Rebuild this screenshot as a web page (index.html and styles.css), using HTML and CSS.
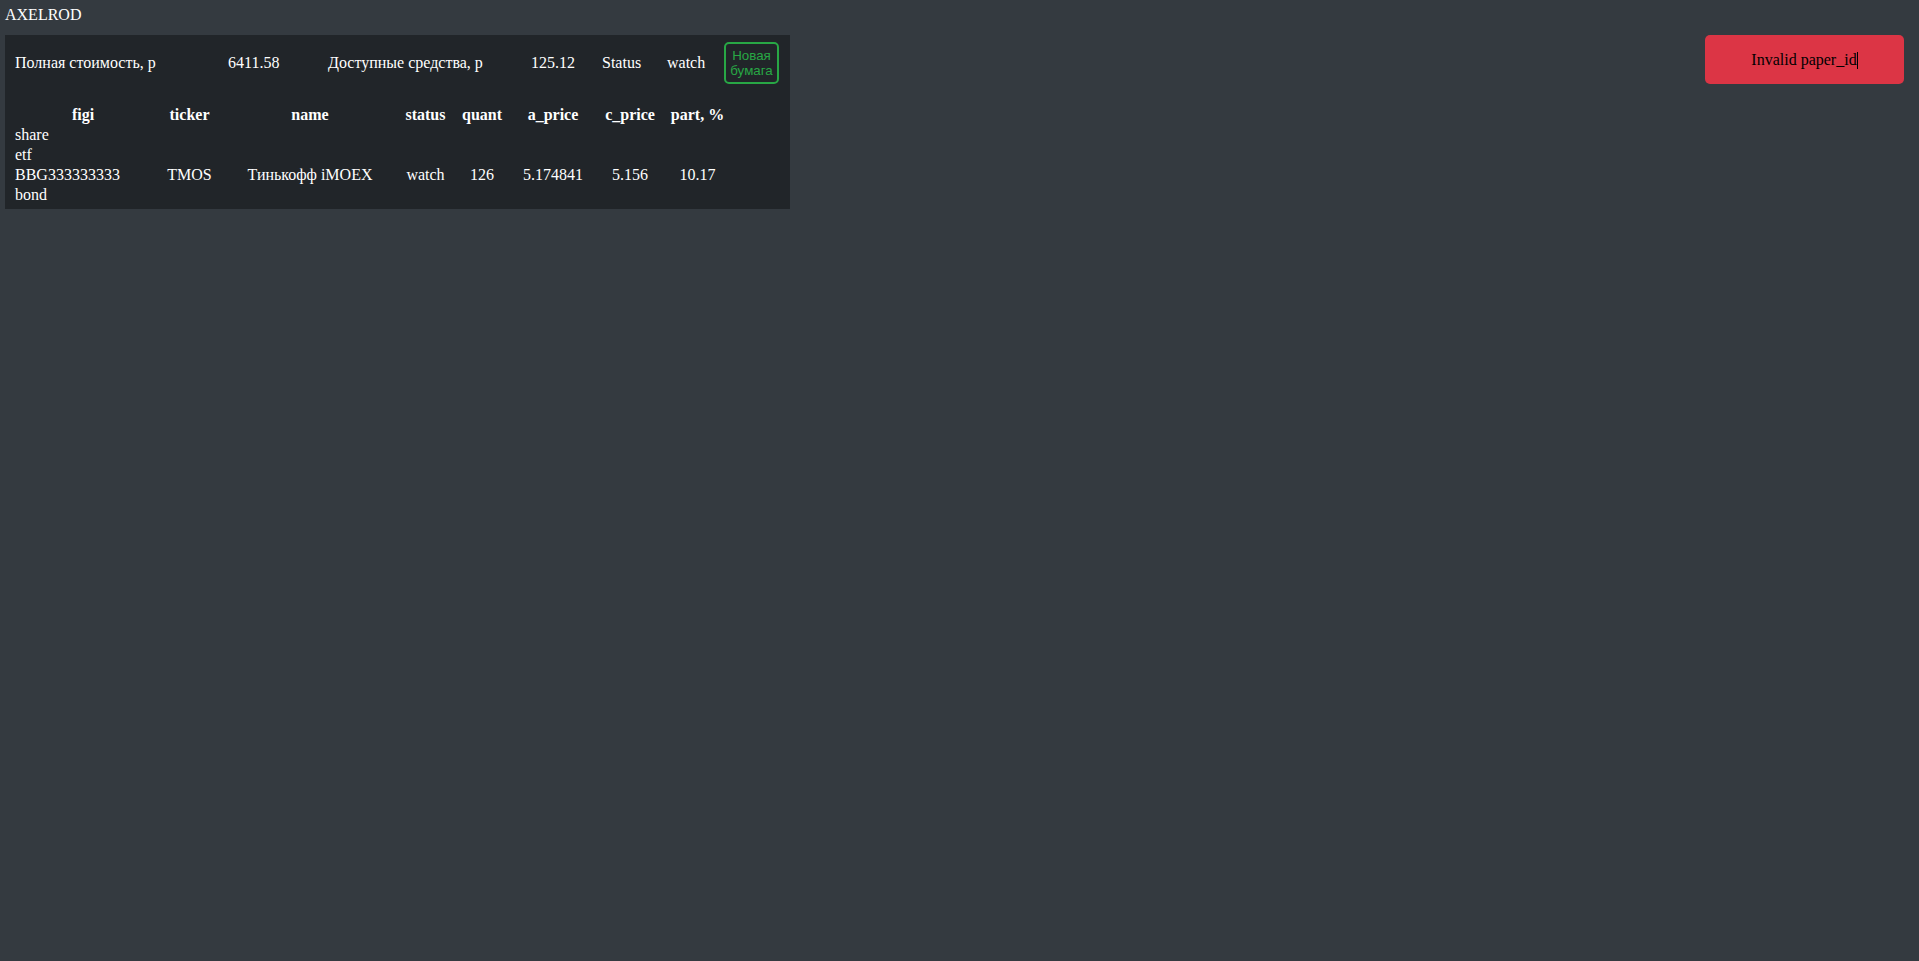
FILE: index.html
```html
<!DOCTYPE html>
<html lang="ru">
<head>
<meta charset="utf-8">
<title>AXELROD</title>
<link rel="stylesheet" href="styles.css">
</head>
<body>
<div class="app">
  <header class="brand">AXELROD</header>
  <section class="panel">
    <div class="summary">
      <span class="s-label1">Полная стоимость, р</span>
      <span class="s-val1">6411.58</span>
      <span class="s-label2">Доступные средства, р</span>
      <span class="s-val2">125.12</span>
      <span class="s-status">Status</span>
      <span class="s-watch">watch</span>
      <button class="btn-new">Новая бумага</button>
    </div>
    <table class="papers">
      <colgroup>
        <col class="c-figi"><col class="c-ticker"><col class="c-name"><col class="c-status">
        <col class="c-quant"><col class="c-aprice"><col class="c-cprice"><col class="c-part">
      </colgroup>
      <thead>
        <tr><th>figi</th><th>ticker</th><th>name</th><th>status</th><th>quant</th><th>a_price</th><th>c_price</th><th>part, %</th></tr>
      </thead>
      <tbody>
        <tr><td class="group" colspan="8">share</td></tr>
        <tr><td class="group" colspan="8">etf</td></tr>
        <tr><td class="figi">BBG333333333</td><td>TMOS</td><td>Тинькофф iMOEX</td><td>watch</td><td>126</td><td>5.174841</td><td>5.156</td><td>10.17</td></tr>
        <tr><td class="group" colspan="8">bond</td></tr>
      </tbody>
    </table>
  </section>
  <div class="toast">Invalid paper_id<span class="caret"></span></div>
</div>
</body>
</html>
```

FILE: styles.css
```css
html, body {
  margin: 0;
  padding: 0;
  background: #343a40;
  height: 100%;
}
body {
  font-family: "Liberation Serif", "Times New Roman", serif;
  font-size: 16px;
  color: #ffffff;
}
.app {
  position: relative;
  min-height: 100%;
}
.brand {
  height: 35px;
  box-sizing: border-box;
  padding: 6px 5px 0;
  line-height: 18px;
}
.panel {
  margin-left: 5px;
  width: 785px;
  box-sizing: border-box;
  background: #212529;
  padding: 7px 10px 4px;
  height: 174px;
}
.summary {
  display: flex;
  align-items: center;
  height: 42px;
  line-height: 18px;
}
.summary span { flex: none; }
.s-label1 { width: 213px; }
.s-val1 { width: 100px; }
.s-label2 { width: 203px; }
.s-val2 { width: 71px; }
.s-status { width: 65px; }
.s-watch { width: 57px; }
.btn-new {
  flex: none;
  width: 55px;
  height: 42px;
  box-sizing: border-box;
  border: 2px solid #28a745;
  border-radius: 5px;
  background: transparent;
  color: #28a745;
  font-family: "Liberation Sans", Arial, sans-serif;
  font-size: 13.333px;
  line-height: 15px;
  padding: 0 3px;
  text-align: center;
}
.papers {
  margin-top: 21px;
  border-collapse: separate;
  border-spacing: 0;
  table-layout: fixed;
  width: 721px;
  color: #ffffff;
  font-size: 16px;
}
.papers th, .papers td {
  padding: 1px 0;
  line-height: 18px;
  text-align: center;
  white-space: nowrap;
}
.papers th { font-weight: bold; }
.papers td.group, .papers td.figi { text-align: left; }
.c-figi { width: 136px; }
.c-ticker { width: 77px; }
.c-name { width: 164px; }
.c-status { width: 67px; }
.c-quant { width: 46px; }
.c-aprice { width: 96px; }
.c-cprice { width: 58px; }
.c-part { width: 77px; }
.toast {
  position: absolute;
  top: 35px;
  right: 15px;
  width: 199px;
  height: 49px;
  box-sizing: border-box;
  background: #dc3545;
  border-radius: 5px;
  color: #000000;
  display: flex;
  align-items: center;
  justify-content: center;
  line-height: 18px;
  padding-top: 1px;
}
.caret {
  display: inline-block;
  width: 1px;
  height: 17px;
  background: #000000;
  margin-left: 0;
  vertical-align: middle;
}
```
